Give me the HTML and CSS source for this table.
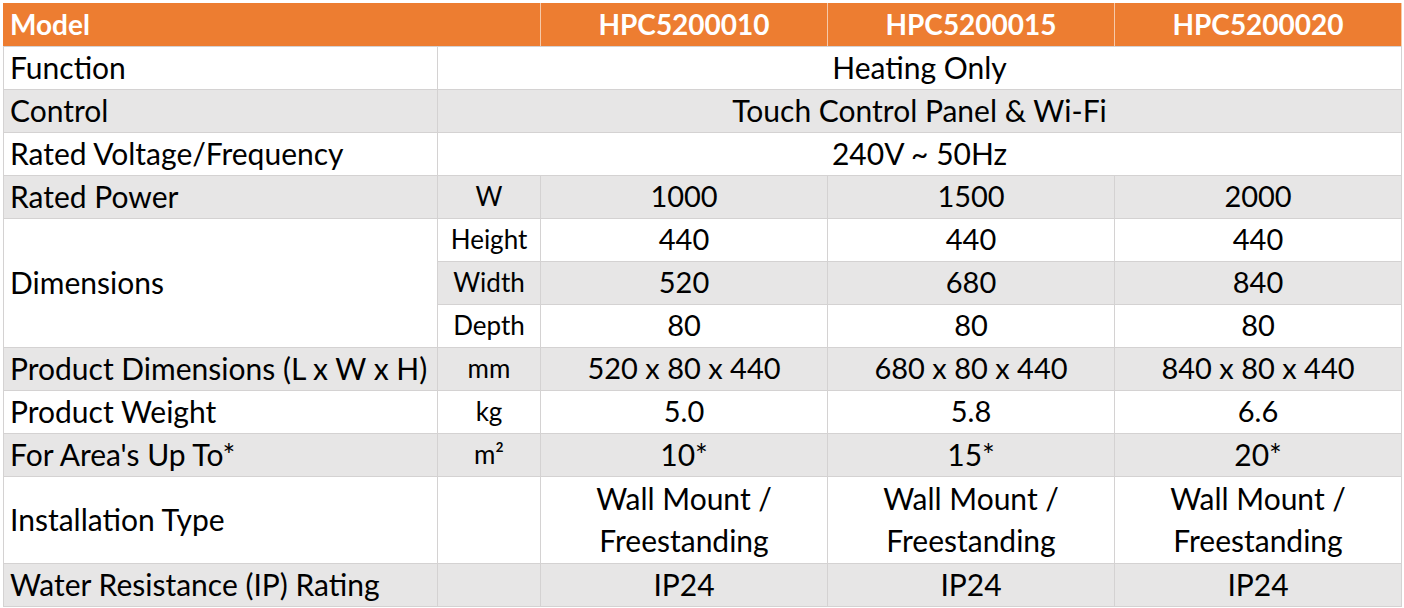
FILE: index.html
```html
<!DOCTYPE html>
<html>
<head>
<meta charset="utf-8">
<link rel="stylesheet" href="styles.css">
</head>
<body>
<table class="spec">
  <colgroup>
    <col class="c-label"><col class="c-unit"><col class="c-model"><col class="c-model"><col class="c-model">
  </colgroup>
  <thead>
    <tr class="head">
      <th colspan="2" class="left">Model</th>
      <th>HPC5200010</th>
      <th>HPC5200015</th>
      <th>HPC5200020</th>
    </tr>
  </thead>
  <tbody>
    <tr class="w"><td class="left">Function</td><td colspan="4">Heating Only</td></tr>
    <tr class="g"><td class="left">Control</td><td colspan="4">Touch Control Panel &amp; Wi-Fi</td></tr>
    <tr class="w"><td class="left">Rated Voltage/Frequency</td><td colspan="4">240V ~ 50Hz</td></tr>
    <tr class="g"><td class="left">Rated Power</td><td class="unit">W</td><td class="num">1000</td><td class="num">1500</td><td class="num">2000</td></tr>
    <tr class="w"><td class="left dim" rowspan="3">Dimensions</td><td class="unit">Height</td><td class="num">440</td><td class="num">440</td><td class="num">440</td></tr>
    <tr class="g"><td class="unit">Width</td><td class="num">520</td><td class="num">680</td><td class="num">840</td></tr>
    <tr class="w"><td class="unit">Depth</td><td class="num">80</td><td class="num">80</td><td class="num">80</td></tr>
    <tr class="g"><td class="left">Product Dimensions (L x W x H)</td><td class="unit">mm</td><td class="num">520 x 80 x 440</td><td class="num">680 x 80 x 440</td><td class="num">840 x 80 x 440</td></tr>
    <tr class="w"><td class="left">Product Weight</td><td class="unit">kg</td><td class="num">5.0</td><td class="num">5.8</td><td class="num">6.6</td></tr>
    <tr class="g"><td class="left">For Area's Up To*</td><td class="unit">m²</td><td>10*</td><td>15*</td><td>20*</td></tr>
    <tr class="w tall"><td class="left">Installation Type</td><td class="unit"></td><td>Wall Mount /<br>Freestanding</td><td>Wall Mount /<br>Freestanding</td><td>Wall Mount /<br>Freestanding</td></tr>
    <tr class="g"><td class="left">Water Resistance (IP) Rating</td><td class="unit"></td><td>IP24</td><td>IP24</td><td>IP24</td></tr>
  </tbody>
</table>
</body>
</html>
```
FILE: styles.css
```css
html, body {
  margin: 0;
  padding: 0;
  background: #ffffff;
}
body {
  padding: 3px;
}
.spec {
  border-collapse: collapse;
  table-layout: fixed;
  width: 1398px;
  font-family: Lato, "Open Sans", sans-serif;
  font-size: 30px;
  color: #000;
}
.c-label { width: 434px; }
.c-unit { width: 103px; }
.c-model { width: 287px; }
.spec th, .spec td {
  border: 1px solid #d4d2d2;
  text-align: center;
  vertical-align: middle;
  padding: 0 6px 2px;
  height: 40px;
  line-height: 40px;
  white-space: nowrap;
  overflow: hidden;
}
.spec td.left, .spec th.left {
  text-align: left;
}
.head th {
  background: #ed7d31;
  color: #ffffff;
  font-weight: 700;
  font-size: 28px;
  border: 1px solid #ed7d31;
  border-left: 1px solid #f6c9a9;
  border-right: 1px solid #f6c9a9;
  border-bottom: 1px solid #d4d2d2;
}
.head th.left {
  border-left-color: #ed7d31;
}
.w td { background: #ffffff; }
.g td { background: #e7e6e6; }
.w td.dim { background: #ffffff; }
.unit { font-size: 26px; }
.num { font-size: 29px; }
.tall td {
  height: 83px;
  line-height: 42px;
}
```
